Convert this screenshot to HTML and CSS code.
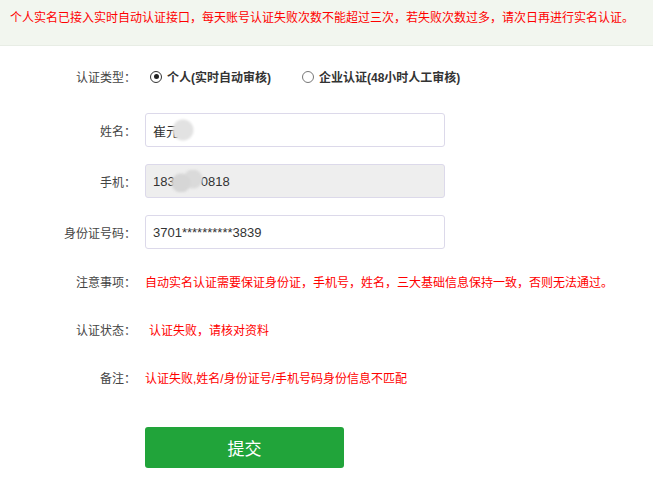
FILE: index.html
```html
<!DOCTYPE html>
<html lang="zh-CN">

<head>
    <meta charset="UTF-8" />
    <meta name="viewport" content="width=device-width, initial-scale=1.0" />
    <title>实名认证</title>
    <link rel="stylesheet" href="styles.css">
</head>

<body>

    <div class="notice">个人实名已接入实时自动认证接口，每天账号认证失败次数不能超过三次，若失败次数过多，请次日再进行实名认证。</div>

    <div class="form">
        <div class="row">
            <div class="label">认证类型：</div>
            <label class="radio checked"><span class="dot"></span>个人(实时自动审核)</label>
            <label class="radio"><span class="dot"></span>企业认证(48小时人工审核)</label>
        </div>

        <div class="row field-row">
            <div class="label">姓名：</div>
            <div class="field">崔元<span class="mask small"></span></div>
        </div>

        <div class="row field-row">
            <div class="label">手机：</div>
            <div class="field disabled">183<span class="mask"></span>0818</div>
        </div>

        <div class="row field-row">
            <div class="label">身份证号码：</div>
            <div class="field">3701**********3839</div>
        </div>

        <div class="row text-row first">
            <div class="label">注意事项：</div>
            <div class="value red">自动实名认证需要保证身份证，手机号，姓名，三大基础信息保持一致，否则无法通过。</div>
        </div>

        <div class="row text-row">
            <div class="label">认证状态：</div>
            <div class="value red status">认证失败，请核对资料</div>
        </div>

        <div class="row text-row">
            <div class="label">备注：</div>
            <div class="value red">认证失败,姓名/身份证号/手机号码身份信息不匹配</div>
        </div>

        <button class="submit">提交</button>
    </div>

</body>

</html>
```

FILE: styles.css
```css
body {
    margin: 0;
    font-family: "Liberation Sans", "Noto Sans CJK SC", sans-serif;
    font-size: 12px;
    color: #444;
    background: #fff;
    text-spacing-trim: space-all;
}

.notice {
    height: 46px;
    box-sizing: border-box;
    padding: 10px 10px 0;
    line-height: 16px;
    color: #ff0000;
    background: #f2f6ef;
    border-bottom: 1px solid #e8ede5;
}

.form {
    padding-top: 14px;
}

.row {
    display: flex;
    align-items: center;
}

.label {
    width: 136px;
    flex-shrink: 0;
    text-align: right;
    margin-right: 9px;
}

.radio {
    display: flex;
    align-items: center;
    height: 33px;
    font-weight: bold;
    color: #333;
    margin-left: 5px;
    margin-right: 26px;
}

.radio .dot {
    width: 12px;
    height: 12px;
    box-sizing: border-box;
    border: 1px solid #777;
    border-radius: 50%;
    margin-right: 5px;
    position: relative;
}

.radio.checked .dot {
    border-color: #333;
}

.radio.checked .dot::after {
    content: "";
    position: absolute;
    left: 2.5px;
    top: 2.5px;
    width: 5px;
    height: 5px;
    border-radius: 50%;
    background: #222;
}

.field-row {
    margin-top: 20px;
}

.field-row + .field-row {
    margin-top: 17px;
}

.field {
    width: 300px;
    height: 34px;
    box-sizing: border-box;
    border: 1px solid #dcd9ea;
    border-radius: 3px;
    padding: 0 7px;
    display: flex;
    align-items: center;
    font-size: 13px;
    color: #333;
}

.field.disabled {
    background: #eeeeee;
}

.mask {
    display: inline-block;
    width: 36px;
    height: 22px;
    margin: 0 -4px 0 -6px;
    background:
        radial-gradient(circle at 12px 13px, #d6d6d6 9px, transparent 10px),
        radial-gradient(circle at 24px 9px, #dadada 9px, transparent 10px);
    filter: blur(1px);
}

.mask.small {
    width: 26px;
    margin: 0 0 0 -9px;
    background:
        radial-gradient(circle at 13px 11px, #e2e2e2 10px, transparent 11px);
}

.text-row {
    height: 48px;
}

.text-row.first {
    margin-top: 8px;
}

.value.red {
    color: #ff0000;
}

.value.status {
    padding-left: 4px;
}

.submit {
    display: block;
    margin: 26px 0 0 145px;
    width: 199px;
    height: 41px;
    border: none;
    border-radius: 3px;
    background: #21a43a;
    color: #fff;
    font-family: "Noto Sans CJK SC", sans-serif;
    font-size: 17px;
    cursor: pointer;
}
```
